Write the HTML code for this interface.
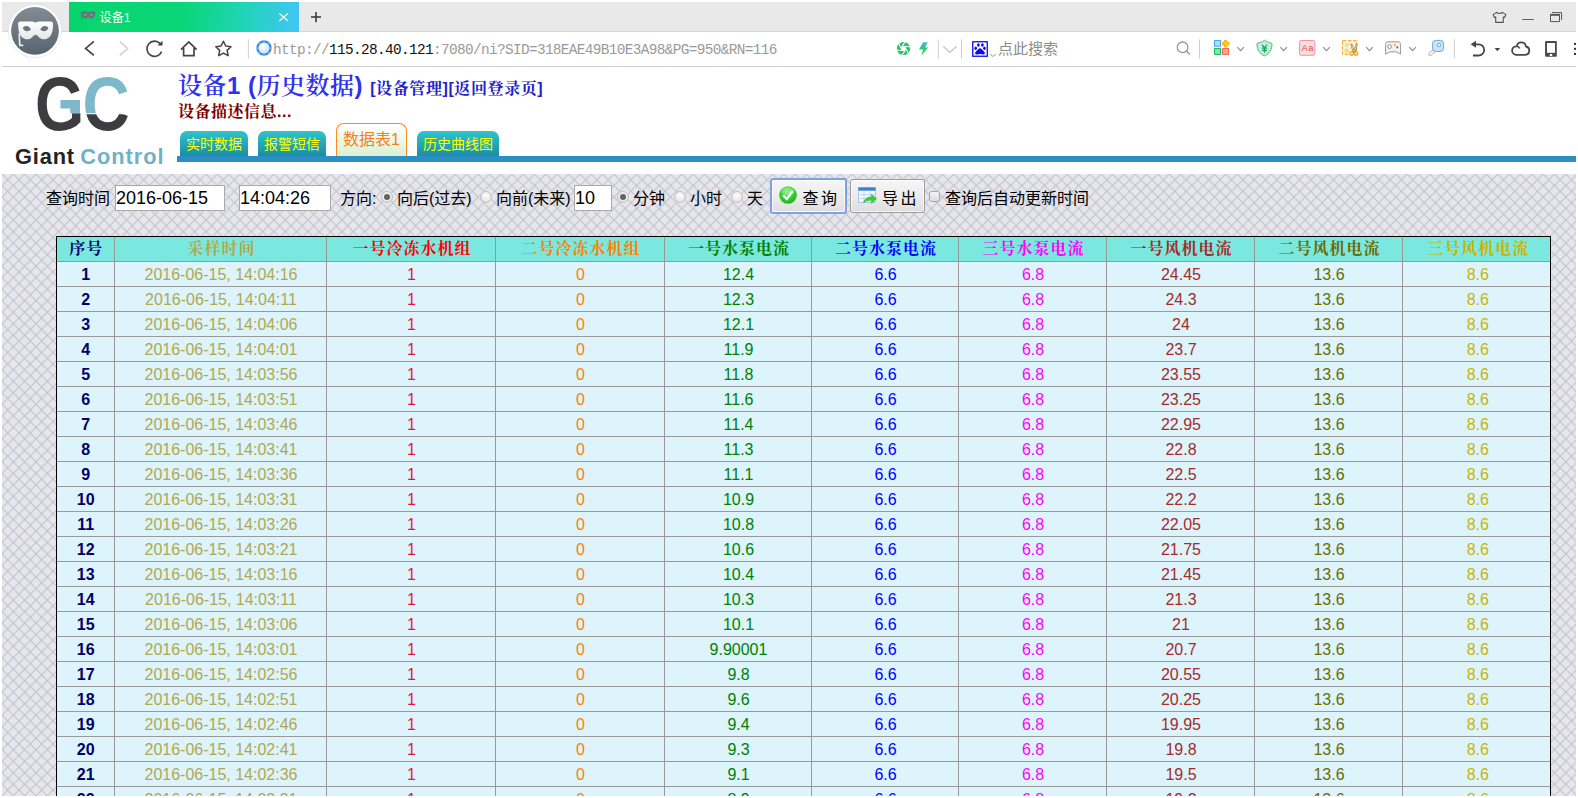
<!DOCTYPE html>
<html lang="zh-CN"><head><meta charset="utf-8"><title>设备1</title>
<style>
html,body{margin:0;padding:0;background:#fff;}
body{width:1578px;height:798px;overflow:hidden;position:relative;font-family:"Liberation Sans","Noto Sans CJK SC",sans-serif;}
#win{position:absolute;left:2px;top:2px;width:1574px;height:794px;overflow:hidden;background:#fff;}
.abs{position:absolute;}
/* browser chrome */
#tabbar{position:absolute;left:0;top:0;width:1574px;height:29px;background:#e9e9e9;border-bottom:1px solid #d6d6d6;}
#tab{position:absolute;left:67px;top:0;width:230px;height:30px;background:linear-gradient(97deg,#08d46e 0%,#0ad678 50%,#1fd4b4 74%,#3cc8ec 96%,#42c4f2 100%);}
#tab .tt{position:absolute;left:30.5px;top:8px;font-size:12.2px;line-height:16px;color:#fff;font-family:"Liberation Sans","Noto Sans CJK SC",sans-serif;letter-spacing:0;}
#toolbar{position:absolute;left:0;top:30px;width:1574px;height:34px;background:#fff;border-bottom:1px solid #cfcfcf;}
#url{position:absolute;left:271px;top:39.5px;font-family:"Liberation Mono","Noto Sans CJK SC",monospace;font-size:14.4px;letter-spacing:-.64px;line-height:16px;color:#9a9a9a;white-space:pre;}
#url b{font-weight:normal;color:#111;}
#search{position:absolute;left:996px;top:38px;font-size:15px;line-height:18px;color:#8c8c8c;font-family:"Liberation Sans","Noto Sans CJK SC",sans-serif;}
/* page */
#page{position:absolute;left:0;top:65px;width:1574px;height:729px;background:#fff;overflow:hidden;}
#title{position:absolute;left:176px;top:3px;white-space:nowrap;font-family:"Liberation Sans","Noto Serif CJK SC",serif;font-weight:bold;color:#3030f0;font-size:24px;line-height:32px;letter-spacing:.5px;font-weight:600;}
#title .lk{font-size:16px;color:#2222cc;letter-spacing:.6px;font-weight:bold;margin-left:0px;}
#desc{position:absolute;left:176px;top:34px;white-space:nowrap;font-family:"Liberation Sans","Noto Serif CJK SC",serif;font-weight:bold;color:#800000;font-size:16px;line-height:22px;letter-spacing:.5px;}
.ptab{position:absolute;top:64px;height:26px;border-radius:7px 7px 0 0;background:linear-gradient(#2fc4cc,#1f9cb0 70%,#1a8aa2);color:#ffff00;font-size:14px;line-height:26px;text-align:center;font-family:"Liberation Sans","Noto Sans CJK SC",sans-serif;}
.ptab.act{top:56px;height:34px;background:linear-gradient(#ffffff,#e9f6e2 60%,#d8efd2);border:1px solid #ff8a1e;border-bottom:none;color:#f08020;line-height:32px;box-sizing:border-box;font-size:16px;border-radius:8px 8px 0 0;}
#bluebar{position:absolute;left:175px;top:89px;width:1399px;height:6px;background:#2b8fc6;}
#content{position:absolute;left:0;top:107px;width:1574px;height:640px;background-color:#e6e6ec;}
#pat{position:absolute;left:0;top:0;width:1574px;height:640px;}
.q{position:absolute;top:14px;font-size:16px;line-height:22px;color:#000;white-space:nowrap;font-family:"Liberation Sans","Noto Sans CJK SC",sans-serif;}
.inp{position:absolute;top:11px;height:24px;background:#fff;border:1px solid #a9a9a9;box-sizing:content-box;font-size:18px;line-height:25px;color:#000;padding-left:0px;white-space:nowrap;font-family:"Liberation Sans",sans-serif;}
.radio{position:absolute;top:17px;width:10px;height:10px;border-radius:50%;border:1px solid #bcbcbc;background:radial-gradient(circle at 50% 35%,#fdfdfd,#e6e6e6 70%,#dedede);box-shadow:0 0 0 .5px rgba(255,255,255,.6);}
.radio.on:after{content:"";position:absolute;left:2px;top:2px;width:6px;height:6px;border-radius:50%;background:#646464;}
.btn{position:absolute;top:5px;height:34px;width:75px;box-sizing:border-box;border:1px solid #9c9c9c;border-radius:3px;background:linear-gradient(#f6f6f6,#ececec 50%,#dedede);font-size:16px;color:#000;box-shadow:inset 0 0 0 1px rgba(255,255,255,.7);}
.btn.foc{top:4px;height:36px;width:77px;border:2px solid #7ba3e4;border-radius:3px;box-shadow:inset 0 0 0 1px rgba(255,255,255,.8);}
.btn span{position:absolute;line-height:22px;letter-spacing:1.5px;white-space:nowrap;font-family:"Liberation Sans","Noto Sans CJK SC",sans-serif;}
.btn svg{position:absolute;}
.chk{position:absolute;left:927px;top:17px;width:11px;height:11px;box-sizing:border-box;border:1px solid #a6a6a6;border-radius:2.5px;background:linear-gradient(#f4f4f4,#dcdcdc);}
/* table */
#tw{position:absolute;left:54px;top:62px;width:1493px;height:600px;border:1px solid #000;border-bottom:none;overflow:hidden;}
table.dt{position:absolute;left:-1px;top:-1px;width:1495px;border-collapse:collapse;table-layout:fixed;border:1px hidden;}
table.dt td,table.dt th{border:1px solid #999;height:24px;padding:0;text-align:center;font-size:16px;line-height:24px;font-weight:normal;background:#ddf4fd;font-family:"Liberation Sans",sans-serif;overflow:hidden;white-space:nowrap;}
table.dt th{height:25px;line-height:25px;padding-left:3px;background:#7be8e0;font-family:"Liberation Sans","Noto Serif CJK SC",serif;font-weight:bold;letter-spacing:1px;}
table.dt td{padding-top:2px;height:22px;line-height:22px;padding-left:2px;}
table.dt td.c0{font-weight:bold;}
.c0{color:#000066;}.c1{color:#b0a84e;}.c2{color:#ff0000;}.c3{color:#ff8000;}.c4{color:#008000;}
.c5{color:#0000ff;}.c6{color:#ff00ff;}.c7{color:#a52a2a;}.c8{color:#6b6b00;}.c9{color:#c8b400;}
td.c2{color:#e8143c;}

#ico{position:absolute;left:-2px;top:-2px;z-index:5;}
#logo{position:absolute;left:-2px;top:1px;}

</style></head><body>
<div id="win">
<div id="tabbar"></div>
<div id="tab"><span class="tt">设备1</span></div>
<div id="toolbar"></div>
<div id="url">http://<b>115.28.40.121</b>:7080/ni?SID=318EAE49B10E3A98&amp;PG=950&amp;RN=116</div>
<div id="search">点此搜索</div>
<svg id="ico" width="1578" height="70" viewBox="0 0 1578 70">
<defs>
<linearGradient id="gav" x1="0" y1="0" x2="0" y2="1"><stop offset="0" stop-color="#838c95"/><stop offset="1" stop-color="#56636e"/></linearGradient>
<linearGradient id="gmask" x1="0" y1="0" x2="0" y2="1"><stop offset="0" stop-color="#ffffff"/><stop offset="1" stop-color="#e4e6e8"/></linearGradient>
<linearGradient id="gbolt" x1="0" y1="0" x2="0" y2="1"><stop offset="0" stop-color="#4ab4f0"/><stop offset=".45" stop-color="#22d070"/><stop offset="1" stop-color="#18d060"/></linearGradient>
<radialGradient id="gglobe" cx=".4" cy=".35" r=".7"><stop offset="0" stop-color="#ffffff"/><stop offset=".6" stop-color="#d6ecfb"/><stop offset="1" stop-color="#a9d4f5"/></radialGradient>
</defs>
<!-- avatar -->
<path d="M24 55 L29.6 61.6 L33.5 57.4 Z" fill="#fff" stroke="#e4e4e4" stroke-width=".6"/>
<circle cx="35" cy="31" r="26.6" fill="#fff" stroke="#e2e2e2" stroke-width=".7"/>
<circle cx="35" cy="30.8" r="23.9" fill="url(#gav)"/>
<path d="M18.2 23.8 C18.1 22.2 19 21.4 20.8 21.4 L32.2 21.4 C33.8 21.4 34.6 22.6 35.6 22.6 C36.6 22.6 37.4 21.4 39 21.4 L50.4 21.4 C52.2 21.4 53.1 22.2 53 23.8 C53 28.8 52.6 33.2 50.2 36.2 C48 39 44.4 39.9 41.6 38.9 C39 38 37.4 34.7 35.6 34.7 C33.8 34.7 32.2 38 29.6 38.9 C26.8 39.9 23.2 39 21 36.2 C18.6 33.2 18.2 28.8 18.2 23.8 Z" fill="url(#gmask)"/>
<path d="M22.8 28.2 C24.2 25.3 29 25 30.9 29.6 C28.6 31.9 24.6 31.9 22.8 28.2 Z" fill="#6a7680"/>
<path d="M48.4 28.2 C47 25.3 42.2 25 40.3 29.6 C42.6 31.9 46.6 31.9 48.4 28.2 Z" fill="#6a7680"/>
<path d="M19.2 34 L19.8 45.4 L22.6 45.4" fill="none" stroke="#e9ebec" stroke-width="1.7" stroke-linecap="round" stroke-linejoin="round"/>
<!-- tab favicon -->
<path d="M81 13.2 C81 11.6 83 11.2 85.2 11.4 C86.6 11.5 87.6 11.9 88.4 12.3 C89.4 11.8 90.6 11.4 92.2 11.3 C94.2 11.2 95.8 11.6 95.4 13.2 C95 16.4 93.6 18.6 91.6 18.6 C90 18.6 89.2 17.4 88.3 17 C87.4 17.4 86.6 18.6 85 18.6 C83.6 18.6 82.6 17.6 82 16 L82 21.4 L83.4 21.4 L83.4 21.8 L81.2 21.8 Z" fill="#716f7b"/>
<ellipse cx="85" cy="14.8" rx="1.6" ry=".9" fill="#2bd483"/><ellipse cx="91.6" cy="14.8" rx="1.6" ry=".9" fill="#2bd483"/>
<!-- close / plus -->
<path d="M279.3 13.4 L288 21 M288 13.4 L279.3 21" stroke="#fff" stroke-width="1.2" fill="none"/>
<path d="M311 17.1 H321 M316 12 V22.2" stroke="#333" stroke-width="1.5" fill="none"/>
<!-- window controls -->
<path d="M1496.6 12.4 C1497.6 13.8 1501.4 13.8 1502.4 12.4 L1505.9 14.6 L1504.6 17.4 L1503.3 16.9 L1503.3 22.4 L1495.7 22.4 L1495.7 16.9 L1494.4 17.4 L1493.1 14.6 Z" fill="none" stroke="#555" stroke-width="1.1" stroke-linejoin="round"/>
<path d="M1522 19.5 H1534" stroke="#666" stroke-width="1"/>
<path d="M1550.5 14.8 H1559.5 V21.6 H1550.5 Z" fill="none" stroke="#555" stroke-width="1"/><path d="M1550 14.8 H1560" stroke="#555" stroke-width="1.8"/>
<path d="M1552 12.6 H1561.6 V20" fill="none" stroke="#555" stroke-width="1"/>
<!-- nav -->
<path d="M93.9 41.3 L85.6 48.4 L93.9 55.3" fill="none" stroke="#444" stroke-width="1.7"/>
<path d="M119.8 41.7 L127.6 48.5 L119.8 55.3" fill="none" stroke="#d2d0d4" stroke-width="1.6"/>
<path d="M161.6 51.6 A7.6 7.6 0 1 1 160.2 43.6" fill="none" stroke="#444" stroke-width="1.6"/>
<path d="M157.6 45.4 L162.6 45.6 L162.4 40.8 Z" fill="#444"/>
<path d="M181 49.6 L188.8 42 L196.6 49.6 M183.6 48 V55.6 H194 V48" fill="none" stroke="#444" stroke-width="1.7" stroke-linejoin="miter"/>
<path d="M223.4 41.2 L225.7 46 L231 46.7 L227.1 50.4 L228.1 55.7 L223.4 53.1 L218.7 55.7 L219.7 50.4 L215.8 46.7 L221.1 46 Z" fill="none" stroke="#444" stroke-width="1.5" stroke-linejoin="round"/>
<path d="M248.4 39.3 V58.6" stroke="#d0d0d0" stroke-width="1"/>
<circle cx="264" cy="48" r="6.6" fill="url(#gglobe)" stroke="#3e8ae2" stroke-width="2.2"/>
<g fill="#bcdcf8"><circle cx="264" cy="41.4" r=".6"/><circle cx="264" cy="54.6" r=".6"/><circle cx="257.4" cy="48" r=".6"/><circle cx="270.6" cy="48" r=".6"/><circle cx="259.3" cy="43.3" r=".6"/><circle cx="268.7" cy="43.3" r=".6"/><circle cx="259.3" cy="52.7" r=".6"/><circle cx="268.7" cy="52.7" r=".6"/></g>
<!-- right of url -->
<circle cx="903.5" cy="48.5" r="6.6" fill="#27c266"/>
<g stroke="#fff" stroke-width="1.1" fill="none"><path d="M902 46 L905.4 41.6"/><path d="M905 46.2 L910.4 47"/><path d="M906.3 48.9 L908.4 54"/><path d="M905 51 L901.6 55.4"/><path d="M902 50.8 L896.6 50"/><path d="M900.7 48.1 L898.6 43"/></g>
<circle cx="903.5" cy="48.5" r="2.7" fill="#fff"/>
<path d="M923.1 42.2 L927.7 42.2 L925.2 47.4 L928.1 47.4 L921.3 55.7 L923.2 49.4 L919 49.4 Z" fill="url(#gbolt)"/>
<path d="M938.3 39.3 V58.6 M961.5 39.3 V58.6 M1199.5 39.3 V58.6 M1454.4 39.3 V58.6" stroke="#d0d0d0" stroke-width="1"/>
<path d="M943.3 46.3 L949.9 52.4 L956.6 46.3" fill="none" stroke="#c2c2c2" stroke-width="1.2"/>
<rect x="972.75" y="41.75" width="14.5" height="14.5" fill="#fff" stroke="#0a0af0" stroke-width="1.3"/>
<g fill="#0a0af0"><path d="M980 48.2 C981.2 48.2 982.6 50 984.2 51.8 C985.6 53.4 984.8 54.9 983 54.5 C981.8 54.2 980.8 53.9 980 53.9 C979.2 53.9 978.2 54.2 977 54.5 C975.2 54.9 974.4 53.4 975.8 51.8 C977.4 50 978.8 48.2 980 48.2 Z"/><ellipse cx="975.7" cy="48.2" rx="1.3" ry="1.7"/><ellipse cx="984.4" cy="48.3" rx="1.3" ry="1.7"/><ellipse cx="978.4" cy="45" rx="1.35" ry="1.8"/><ellipse cx="982.4" cy="45" rx="1.35" ry="1.8"/></g>
<path d="M990.2 54.1 L993.1 56.5 L996 54.1" fill="none" stroke="#9a9a9a" stroke-width="1"/>
<circle cx="1182.6" cy="47.3" r="5.3" fill="none" stroke="#999" stroke-width="1.3"/><path d="M1186.4 51 L1189.8 54.6" stroke="#999" stroke-width="1.4"/>
<!-- extension icons -->
<rect x="1214.5" y="40.6" width="6" height="5.6" fill="#a4defc" stroke="#3f9ee8" stroke-width=".9"/>
<rect x="1214.5" y="48.6" width="6" height="5.8" fill="#7ee6a8" stroke="#16b053" stroke-width=".9"/>
<rect x="1222.6" y="48.6" width="6" height="5.8" fill="#ffa898" stroke="#f05a42" stroke-width=".9"/>
<path d="M1224.4 40.4 H1226.8 V42.5 H1228.9 V44.9 H1226.8 V47 H1224.4 V44.9 H1222.3 V42.5 H1224.4 Z" fill="#ffd21f" stroke="#f0a000" stroke-width=".8" stroke-linejoin="round"/>
<g fill="none" stroke="#8a8a8a" stroke-width="1.1"><path d="M1237.3 47.2 L1240.6 50.6 L1243.9 47.2"/><path d="M1280.3 47.2 L1283.6 50.6 L1286.9 47.2"/><path d="M1323.2 47.2 L1326.5 50.6 L1329.8 47.2"/><path d="M1366.2 47.2 L1369.5 50.6 L1372.8 47.2"/><path d="M1409.2 47.2 L1412.5 50.6 L1415.8 47.2"/></g>
<path d="M1264.5 40.2 C1266.6 41.8 1269 42.8 1271.2 43 C1271.8 43.1 1272 43.4 1272 44 C1272 49.6 1269.6 53.8 1264.5 55.9 C1259.4 53.8 1257 49.6 1257 44 C1257 43.4 1257.2 43.1 1257.8 43 C1260 42.8 1262.4 41.8 1264.5 40.2 Z" fill="#c4f0d8" stroke="#36b87b" stroke-width=".9"/>
<path d="M1262 44.6 L1264.5 47.8 L1267 44.6 M1264.5 47.8 V52.8 M1262 48.2 H1267 M1262 50.3 H1267" fill="none" stroke="#1f9d5c" stroke-width="1.2"/>
<rect x="1299.5" y="40.5" width="15.4" height="14.8" rx="1.6" fill="#fbdcdc" stroke="#ea8f8f" stroke-width=".9"/>
<text x="1301.6" y="51" font-family="Liberation Sans, sans-serif" font-size="9.3" letter-spacing=".5" fill="#d45050">Aa</text>
<rect x="1342.6" y="40.6" width="14" height="14" fill="#fdf0cf" stroke="#f2a51c" stroke-width="1" stroke-dasharray="3.6 1.6"/>
<circle cx="1346.8" cy="44.9" r="2" fill="#f9d894"/><circle cx="1346.6" cy="50.8" r="2.2" fill="#f9d894"/>
<path d="M1351.6 45 L1353.6 51.4 M1356.6 45 L1354.6 51.4" stroke="#8a6a3a" stroke-width="2" fill="none" stroke-linecap="round"/><path d="M1351.7 45.4 L1353.5 51 M1356.5 45.4 L1354.7 51" stroke="#fffaf0" stroke-width=".8" fill="none" stroke-linecap="round"/>
<circle cx="1351.7" cy="53.5" r="1.9" fill="#fde9b8" stroke="#f08a00" stroke-width="1"/><circle cx="1356" cy="53.5" r="1.9" fill="#fde9b8" stroke="#f08a00" stroke-width="1"/>
<path d="M1388 41.8 H1398.2 C1399.8 41.8 1400.6 42.8 1400.6 44.4 V54.2 L1396.4 51.8 H1389.8 L1385.6 54.2 V44.4 C1385.6 42.8 1386.4 41.8 1388 41.8 Z" fill="#f2f2f2" stroke="#9a9a9a" stroke-width="1" stroke-linejoin="round"/>
<circle cx="1389.6" cy="46.6" r="1.9" fill="#fff" stroke="#8a8a8a" stroke-width=".9"/><rect x="1394" y="44.2" width="1.8" height="1.8" fill="#f5b400"/><rect x="1396.4" y="46.4" width="1.8" height="1.8" fill="#e8302a"/>
<path d="M1434 51 L1430.1 54.1" stroke="#a6a6a6" stroke-width="3.5" stroke-linecap="round"/><path d="M1434 51 L1430.1 54.1" stroke="#fafafa" stroke-width="2" stroke-linecap="round"/>
<rect x="1432.6" y="40.4" width="11" height="11" rx="3" fill="#c6e5fb" stroke="#6aa9d4" stroke-width="1"/>
<circle cx="1439" cy="45" r="1.7" fill="#e4f3fe" stroke="#6aa9d4" stroke-width=".9"/>
<!-- right controls -->
<path d="M1473.4 44.3 H1478.6 A5.6 5.6 0 0 1 1478.6 55.5 H1473" fill="none" stroke="#444" stroke-width="1.8"/>
<path d="M1470.6 44.3 L1476 40.8 V47.8 Z" fill="#444"/>
<path d="M1494.6 47.9 H1500.2 L1497.4 51.2 Z" fill="#444"/>
<path d="M1516 54.8 H1525.4 A4.2 4.2 0 0 0 1525.9 46.5 A4.6 4.6 0 0 0 1516.8 46.3 A4.25 4.25 0 0 0 1516 54.8 Z" fill="none" stroke="#484848" stroke-width="1.8" stroke-linejoin="round"/>
<path d="M1516.8 46.3 C1518.2 46.5 1519.3 47.3 1519.7 48.6" fill="none" stroke="#484848" stroke-width="1.6"/>
<rect x="1545.1" y="41.1" width="11.7" height="15.7" rx=".8" fill="#4a4a4a"/><rect x="1547" y="43" width="8" height="9.8" fill="#fff"/><rect x="1549.8" y="54" width="2.4" height="2" fill="#fff"/>
<g fill="#333"><rect x="1574" y="42.9" width="2" height="2"/><rect x="1574" y="47.8" width="2" height="2"/><rect x="1574" y="53" width="2" height="2"/></g>
</svg>

<div id="page">
<svg id="logo" width="175" height="106" viewBox="0 68 175 106">
<defs>
<clipPath id="cTop"><rect x="80" y="70" width="60" height="43.3"/></clipPath>
<clipPath id="cBot"><rect x="80" y="114.2" width="60" height="30"/></clipPath>
</defs>
<g font-family="Liberation Sans, sans-serif" font-weight="bold" font-size="75.5">
<text transform="translate(35.0 130.4) scale(.84 1)" fill="#3d3d3f">G</text>
<g clip-path="url(#cTop)"><text transform="translate(82.6 130.4) scale(.865 1)" fill="#7db8cb">C</text></g>
<g clip-path="url(#cBot)"><text transform="translate(82.6 130.4) scale(.865 1)" fill="#3d3d3f">C</text></g>
</g>
<path d="M56 97.6 H83 V113.3 H70.2 V115.4 H56 Z" fill="#fff"/>
<path d="M60.4 100 H80 V113.3 H70.2 V108.4 H60.4 Z" fill="#7db8cb"/>
<text x="15" y="164.4" font-family="Liberation Sans, sans-serif" font-weight="bold" font-size="21.8" letter-spacing=".85" fill="#232323">Giant</text>
<text x="80.2" y="164.4" font-family="Liberation Sans, sans-serif" font-weight="bold" font-size="21.8" letter-spacing="1.0" fill="#6fb1c6">Control</text>
</svg>
<div id="title">设备1 (历史数据) <span class="lk">[设备管理][返回登录页]</span></div>
<div id="desc">设备描述信息...</div>
<div class="ptab" style="left:178px;width:68px;">实时数据</div>
<div class="ptab" style="left:256px;width:68px;">报警短信</div>
<div class="ptab act" style="left:334px;width:71px;">数据表1</div>
<div class="ptab" style="left:415px;width:82px;">历史曲线图</div>
<div id="bluebar"></div>

<div id="content">
<svg id="pat" width="1574" height="640"><defs><pattern id="xh" width="11.332" height="11.515" patternUnits="userSpaceOnUse" x="0" y="0"><path d="M-1.133 -1.152L12.465 12.667M-1.133 12.667L12.465 -1.152" stroke="#c1c1ca" stroke-width="1.1" fill="none"/></pattern></defs><rect width="1574" height="640" fill="url(#xh)"/></svg>
<div class="q" style="left:44px;">查询时间</div>
<div class="inp" style="left:113px;width:108px;">2016-06-15</div>
<div class="inp" style="left:237px;width:90px;">14:04:26</div>
<div class="q" style="left:338px;">方向:</div>
<div class="radio on" style="left:379px;"></div>
<div class="q" style="left:395px;">向后(过去)</div>
<div class="radio" style="left:478px;"></div>
<div class="q" style="left:494px;">向前(未来)</div>
<div class="inp" style="left:572px;width:36px;">10</div>
<div class="radio on" style="left:615px;"></div>
<div class="q" style="left:631px;">分钟</div>
<div class="radio" style="left:672px;"></div>
<div class="q" style="left:688px;">小时</div>
<div class="radio" style="left:729px;"></div>
<div class="q" style="left:745px;">天</div>
<div class="btn foc" style="left:768px;"><svg style="left:7px;top:6px;" width="18" height="18" viewBox="0 0 18 18"><defs><radialGradient id="gok" cx=".45" cy=".3" r=".8"><stop offset="0" stop-color="#7fe87a"/><stop offset=".55" stop-color="#2fcf2c"/><stop offset="1" stop-color="#19a61a"/></radialGradient></defs><circle cx="9" cy="9" r="8.8" fill="url(#gok)"/><ellipse cx="9" cy="5.2" rx="6.6" ry="3.8" fill="#ffffff" opacity=".22"/><path d="M4.2 9.4 L7.8 13 L13.6 5" fill="none" stroke="#fff" stroke-width="2.3" stroke-linejoin="miter"/></svg><span style="left:30.5px;top:7.5px;letter-spacing:2.5px;">查询</span></div>
<div class="btn" style="left:848px;"><svg style="left:7px;top:7px;" width="19" height="17" viewBox="0 0 19 17"><rect x=".5" y=".5" width="17" height="15" fill="#f2f8fe" stroke="#9bbbe0" stroke-width=".8"/><rect x=".5" y=".5" width="17" height="3.2" fill="#3b82cc"/><path d="M.5 7.6 H17.5 M.5 11.6 H17.5 M6 3.7 V15.5 M12 3.7 V15.5" stroke="#b8d2ee" stroke-width=".9" fill="none"/><path d="M5.6 16 C6.4 11.6 9.6 9.8 13.4 10 L13.4 7.2 L18.6 11.8 L13.4 16.4 L13.4 13.4 C10.4 13.2 8 13.8 5.6 16 Z" fill="#35cf2f" stroke="#28b428" stroke-width=".4"/></svg><span style="left:31px;top:7.5px;letter-spacing:2.5px;">导出</span></div>
<div class="chk"></div>
<div class="q" style="left:943px;">查询后自动更新时间</div>

<div id="tw"><table class="dt" cellspacing="0" cellpadding="0">
<colgroup><col style="width:58px"><col style="width:212px"><col style="width:169px"><col style="width:169px"><col style="width:147px"><col style="width:147px"><col style="width:148px"><col style="width:148px"><col style="width:148px"><col style="width:149px"></colgroup>
<tr class="hd"><th class="c0">序号</th><th class="c1">采样时间</th><th class="c2">一号冷冻水机组</th><th class="c3">二号冷冻水机组</th><th class="c4">一号水泵电流</th><th class="c5">二号水泵电流</th><th class="c6">三号水泵电流</th><th class="c7">一号风机电流</th><th class="c8">二号风机电流</th><th class="c9">三号风机电流</th></tr>
<tr><td class="c0">1</td><td class="c1">2016-06-15, 14:04:16</td><td class="c2">1</td><td class="c3">0</td><td class="c4">12.4</td><td class="c5">6.6</td><td class="c6">6.8</td><td class="c7">24.45</td><td class="c8">13.6</td><td class="c9">8.6</td></tr>
<tr><td class="c0">2</td><td class="c1">2016-06-15, 14:04:11</td><td class="c2">1</td><td class="c3">0</td><td class="c4">12.3</td><td class="c5">6.6</td><td class="c6">6.8</td><td class="c7">24.3</td><td class="c8">13.6</td><td class="c9">8.6</td></tr>
<tr><td class="c0">3</td><td class="c1">2016-06-15, 14:04:06</td><td class="c2">1</td><td class="c3">0</td><td class="c4">12.1</td><td class="c5">6.6</td><td class="c6">6.8</td><td class="c7">24</td><td class="c8">13.6</td><td class="c9">8.6</td></tr>
<tr><td class="c0">4</td><td class="c1">2016-06-15, 14:04:01</td><td class="c2">1</td><td class="c3">0</td><td class="c4">11.9</td><td class="c5">6.6</td><td class="c6">6.8</td><td class="c7">23.7</td><td class="c8">13.6</td><td class="c9">8.6</td></tr>
<tr><td class="c0">5</td><td class="c1">2016-06-15, 14:03:56</td><td class="c2">1</td><td class="c3">0</td><td class="c4">11.8</td><td class="c5">6.6</td><td class="c6">6.8</td><td class="c7">23.55</td><td class="c8">13.6</td><td class="c9">8.6</td></tr>
<tr><td class="c0">6</td><td class="c1">2016-06-15, 14:03:51</td><td class="c2">1</td><td class="c3">0</td><td class="c4">11.6</td><td class="c5">6.6</td><td class="c6">6.8</td><td class="c7">23.25</td><td class="c8">13.6</td><td class="c9">8.6</td></tr>
<tr><td class="c0">7</td><td class="c1">2016-06-15, 14:03:46</td><td class="c2">1</td><td class="c3">0</td><td class="c4">11.4</td><td class="c5">6.6</td><td class="c6">6.8</td><td class="c7">22.95</td><td class="c8">13.6</td><td class="c9">8.6</td></tr>
<tr><td class="c0">8</td><td class="c1">2016-06-15, 14:03:41</td><td class="c2">1</td><td class="c3">0</td><td class="c4">11.3</td><td class="c5">6.6</td><td class="c6">6.8</td><td class="c7">22.8</td><td class="c8">13.6</td><td class="c9">8.6</td></tr>
<tr><td class="c0">9</td><td class="c1">2016-06-15, 14:03:36</td><td class="c2">1</td><td class="c3">0</td><td class="c4">11.1</td><td class="c5">6.6</td><td class="c6">6.8</td><td class="c7">22.5</td><td class="c8">13.6</td><td class="c9">8.6</td></tr>
<tr><td class="c0">10</td><td class="c1">2016-06-15, 14:03:31</td><td class="c2">1</td><td class="c3">0</td><td class="c4">10.9</td><td class="c5">6.6</td><td class="c6">6.8</td><td class="c7">22.2</td><td class="c8">13.6</td><td class="c9">8.6</td></tr>
<tr><td class="c0">11</td><td class="c1">2016-06-15, 14:03:26</td><td class="c2">1</td><td class="c3">0</td><td class="c4">10.8</td><td class="c5">6.6</td><td class="c6">6.8</td><td class="c7">22.05</td><td class="c8">13.6</td><td class="c9">8.6</td></tr>
<tr><td class="c0">12</td><td class="c1">2016-06-15, 14:03:21</td><td class="c2">1</td><td class="c3">0</td><td class="c4">10.6</td><td class="c5">6.6</td><td class="c6">6.8</td><td class="c7">21.75</td><td class="c8">13.6</td><td class="c9">8.6</td></tr>
<tr><td class="c0">13</td><td class="c1">2016-06-15, 14:03:16</td><td class="c2">1</td><td class="c3">0</td><td class="c4">10.4</td><td class="c5">6.6</td><td class="c6">6.8</td><td class="c7">21.45</td><td class="c8">13.6</td><td class="c9">8.6</td></tr>
<tr><td class="c0">14</td><td class="c1">2016-06-15, 14:03:11</td><td class="c2">1</td><td class="c3">0</td><td class="c4">10.3</td><td class="c5">6.6</td><td class="c6">6.8</td><td class="c7">21.3</td><td class="c8">13.6</td><td class="c9">8.6</td></tr>
<tr><td class="c0">15</td><td class="c1">2016-06-15, 14:03:06</td><td class="c2">1</td><td class="c3">0</td><td class="c4">10.1</td><td class="c5">6.6</td><td class="c6">6.8</td><td class="c7">21</td><td class="c8">13.6</td><td class="c9">8.6</td></tr>
<tr><td class="c0">16</td><td class="c1">2016-06-15, 14:03:01</td><td class="c2">1</td><td class="c3">0</td><td class="c4">9.90001</td><td class="c5">6.6</td><td class="c6">6.8</td><td class="c7">20.7</td><td class="c8">13.6</td><td class="c9">8.6</td></tr>
<tr><td class="c0">17</td><td class="c1">2016-06-15, 14:02:56</td><td class="c2">1</td><td class="c3">0</td><td class="c4">9.8</td><td class="c5">6.6</td><td class="c6">6.8</td><td class="c7">20.55</td><td class="c8">13.6</td><td class="c9">8.6</td></tr>
<tr><td class="c0">18</td><td class="c1">2016-06-15, 14:02:51</td><td class="c2">1</td><td class="c3">0</td><td class="c4">9.6</td><td class="c5">6.6</td><td class="c6">6.8</td><td class="c7">20.25</td><td class="c8">13.6</td><td class="c9">8.6</td></tr>
<tr><td class="c0">19</td><td class="c1">2016-06-15, 14:02:46</td><td class="c2">1</td><td class="c3">0</td><td class="c4">9.4</td><td class="c5">6.6</td><td class="c6">6.8</td><td class="c7">19.95</td><td class="c8">13.6</td><td class="c9">8.6</td></tr>
<tr><td class="c0">20</td><td class="c1">2016-06-15, 14:02:41</td><td class="c2">1</td><td class="c3">0</td><td class="c4">9.3</td><td class="c5">6.6</td><td class="c6">6.8</td><td class="c7">19.8</td><td class="c8">13.6</td><td class="c9">8.6</td></tr>
<tr><td class="c0">21</td><td class="c1">2016-06-15, 14:02:36</td><td class="c2">1</td><td class="c3">0</td><td class="c4">9.1</td><td class="c5">6.6</td><td class="c6">6.8</td><td class="c7">19.5</td><td class="c8">13.6</td><td class="c9">8.6</td></tr>
<tr><td class="c0">22</td><td class="c1">2016-06-15, 14:02:31</td><td class="c2">1</td><td class="c3">0</td><td class="c4">8.9</td><td class="c5">6.6</td><td class="c6">6.8</td><td class="c7">19.2</td><td class="c8">13.6</td><td class="c9">8.6</td></tr>
</table></div>
</div>
</div>
</div>
</body></html>
